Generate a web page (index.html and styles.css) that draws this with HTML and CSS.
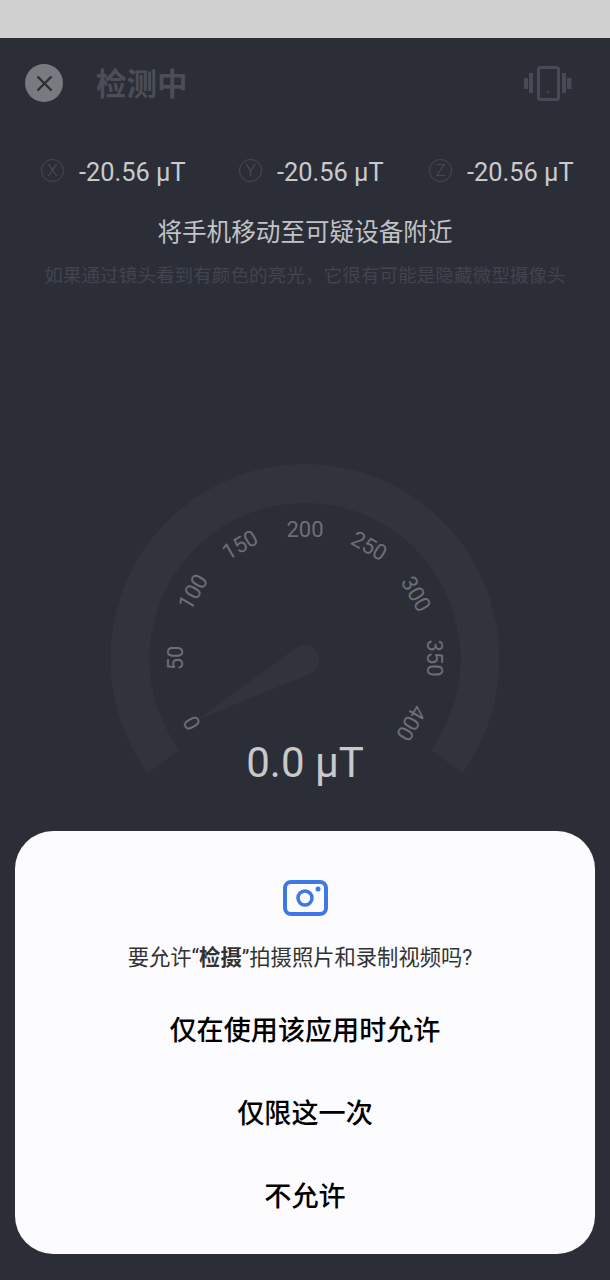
FILE: index.html
```html
<!DOCTYPE html>
<html lang="zh">
<head>
<meta charset="utf-8">
<title>检测中</title>
<link rel="stylesheet" href="styles.css">
</head>
<body>
<div class="screen">
  <div class="statusband"></div>
  <main class="scan">
    <header class="topbar">
      <div class="close">
        <svg width="38" height="38" viewBox="0 0 38 38"><path d="M12.500 12.500 L26.500 26.500 M26.500 12.500 L12.500 26.500" class="close-x"/></svg>
      </div>
      <h1 class="title">检测中</h1>
      <svg class="vibrate" width="48" height="36" viewBox="0 0 48 36">
        <rect x="14.500" y="2.500" width="20" height="32" rx="2" class="phone"/>
        <rect x="22.700" y="25.700" width="2" height="2" class="dot"/>
        <rect x="5" y="8" width="4" height="20" class="dot"/>
        <rect x="38" y="8" width="4" height="20" class="dot"/>
        <rect x="0" y="13" width="4" height="11" class="dot"/>
        <rect x="43" y="13" width="4.500" height="11" class="dot"/>
      </svg>
    </header>
    <div class="axes">
      <div class="axis">
        <span class="badge">X</span><span class="value">-20.56 μT</span>
      </div>
      <div class="axis">
        <span class="badge">Y</span><span class="value">-20.56 μT</span>
      </div>
      <div class="axis">
        <span class="badge">Z</span><span class="value">-20.56 μT</span>
      </div>
    </div>
    <p class="hint">将手机移动至可疑设备附近</p>
    <p class="subhint">如果通过镜头看到有颜色的亮光，它很有可能是隐藏微型摄像头</p>
    <svg class="gauge" width="610" height="340" viewBox="0 0 610 340">
      <path class="gauge-arc" d="M163.500 299.500 A175 175 0 1 1 446.500 299.500"/>
      <path class="gauge-needle" d="M197 258 L297 185 A14.500 14.500 0 0 1 312 211 Z"/>
      <g class="gauge-labels">
        <text transform="translate(192 261) rotate(-120)">0</text>
        <text transform="translate(175 196) rotate(-90)">50</text>
        <text transform="translate(193 130) rotate(-60)">100</text>
        <text transform="translate(240 83) rotate(-30)">150</text>
        <text transform="translate(305 67)">200</text>
        <text transform="translate(369 84) rotate(30)">250</text>
        <text transform="translate(416 132) rotate(60)">300</text>
        <text transform="translate(434 196) rotate(90)">350</text>
        <text transform="translate(411 261) rotate(120)">400</text>
      </g>
      <text class="gauge-value" x="305" y="315">0.0 μT</text>
    </svg>
  </main>
  <section class="sheet">
    <svg class="camera" width="46" height="38" viewBox="0 0 46 38">
      <rect x="3" y="2" width="41" height="32" rx="6" class="cam-body"/>
      <circle cx="23" cy="18" r="7" class="cam-lens"/>
      <circle cx="36" cy="9" r="2.500" class="cam-dot"/>
    </svg>
    <p class="question">要允许“<b>检摄</b>”拍摄照片和录制视频吗?</p>
    <button class="choice choice-first">仅在使用该应用时允许</button>
    <button class="choice">仅限这一次</button>
    <button class="choice">不允许</button>
  </section>
</div>
</body>
</html>
```
FILE: styles.css
```css
* { box-sizing: border-box; }
html, body { margin: 0; padding: 0; }
body {
  width: 610px;
  height: 1280px;
  overflow: hidden;
  background: #2b2e37;
  font-family: Roboto, "Noto Sans CJK SC", sans-serif;
}
.screen { display: flex; flex-direction: column; height: 1280px; }
.statusband { height: 38px; background: #d0d0d0; flex: none; }
.scan { flex: none; height: 793px; display: flex; flex-direction: column; }
.topbar {
  display: flex;
  align-items: center;
  height: 38px;
  margin-top: 26px;
  padding: 0 38px 0 25px;
}
.close {
  width: 38px;
  height: 38px;
  border-radius: 50%;
  background: #787a80;
  flex: none;
}
.close svg { display: block; }
.close-x { stroke: #2b2e37; stroke-width: 2.400; fill: none; }
.title {
  margin: -3px 0 0 33px;
  font-size: 30.500px;
  line-height: 38px;
  font-weight: 700;
  color: #4b4d57;
  flex: 1;
  font-family: "Noto Sans CJK SC", sans-serif;
}
.vibrate { flex: none; }
.phone { fill: none; stroke: #474954; stroke-width: 3; }
.dot { fill: #474954; }
.axes {
  display: flex;
  margin-top: 55px;
  padding-left: 41px;
}
.axis { display: flex; align-items: center; gap: 15px; height: 30px; flex: none; }
.axis:nth-child(1) { width: 198px; }
.axis:nth-child(2) { width: 190px; }
.badge {
  width: 23px;
  height: 23px;
  border-radius: 50%;
  border: 1.500px solid #484a54;
  color: #4a4c56;
  font-size: 17px;
  font-weight: 300;
  line-height: 20px;
  text-align: center;
  margin-top: -3px;
}
.value { font-size: 25.400px; line-height: 30px; color: #c9cacc; white-space: nowrap; }
.hint {
  margin: 25px 0 0;
  text-align: center;
  font-size: 24.600px;
  line-height: 36px;
  color: #c2c3c6;
  font-family: "Noto Sans CJK SC", sans-serif;
}
.subhint {
  margin: 12px 0 0;
  text-align: center;
  font-size: 18.640px;
  line-height: 28px;
  color: #42444e;
  white-space: nowrap;
  font-family: "Noto Sans CJK SC", sans-serif;
}
.gauge { display: block; margin-top: 174px; flex: none; }
.gauge-arc { fill: none; stroke: #32333d; stroke-width: 39; }
.gauge-needle { fill: #31333d; }
.gauge-labels text {
  font-size: 22px;
  fill: #6d6f76;
  text-anchor: middle;
  dominant-baseline: central;
}
.gauge-value {
  font-size: 42px;
  fill: #c8c9cb;
  text-anchor: middle;
}
.sheet {
  flex: none;
  margin: 0 15px;
  height: 423px;
  border-radius: 38px;
  background: #fcfcfe;
  display: flex;
  flex-direction: column;
  align-items: center;
  padding-top: 49px;
}
.camera { display: block; flex: none; }
.cam-body { fill: none; stroke: #3e78e6; stroke-width: 4; }
.cam-lens { fill: none; stroke: #3e78e6; stroke-width: 3.500; }
.cam-dot { fill: #3e78e6; }
.question {
  margin: 25px 10px 0 0;
  font-size: 21.300px;
  line-height: 30px;
  color: #333;
  font-family: Roboto, "Noto Sans CJK SC", sans-serif;
  white-space: nowrap;
}
.question b { font-weight: 700; }
.choice {
  display: block;
  border: 0;
  background: none;
  padding: 0;
  height: 83px;
  width: 100%;
  font-size: 27.100px;
  line-height: 83px;
  font-weight: 500;
  color: #000;
  font-family: "Noto Sans CJK SC", sans-serif;
}
.choice-first { margin-top: 14px; }
```
